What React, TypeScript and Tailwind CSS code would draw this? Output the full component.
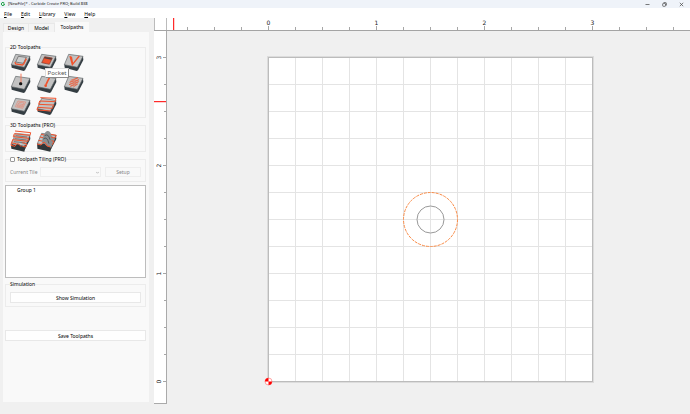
import React from "react";

type IconName =
  | "contour"
  | "pocket"
  | "vcarve"
  | "drill"
  | "engrave"
  | "texture"
  | "keyhole"
  | "facing"
  | "rough3d"
  | "finish3d";

const marks: Record<IconName, React.ReactNode> = {
  contour: (
    <>
      <path d="M22 7 L46 10 L37 28 L14 24 Z" fill="#cdcdcd" stroke="#555" strokeWidth="2" />
      <path d="M12 24 L14 30 L34 33 L38 30 L46 14" fill="none" stroke="#f0532d" strokeWidth="4" />
    </>
  ),
  pocket: (
    <>
      <path d="M23 8 L46 12 L37 31 L14 26 Z" fill="#f0532d" stroke="#7a3a2c" strokeWidth="2" />
      <path d="M23 9 L45 13 L43 17 L21 13 Z" fill="#4b3f3e" />
    </>
  ),
  vcarve: <path d="M18 6 L25 32 L46 6 M22 8 L26 30" fill="none" stroke="#f0532d" strokeWidth="4" />,
  drill: (
    <>
      <circle cx="29" cy="23" r="5" fill="#151515" />
      <path d="M30 -7 V19" stroke="#f47a5c" strokeWidth="3" />
    </>
  ),
  engrave: (
    <>
      <path d="M38 4 L33 13 L27 26" fill="none" stroke="#f0532d" strokeWidth="5" />
      <circle cx="26" cy="29" r="4" fill="#f0532d" />
    </>
  ),
  texture: (
    <path
      d="M20 13 L42 5 L17 19 L45 11 L15 26 L44 17 L19 31 L41 24 L27 34"
      fill="none"
      stroke="#f0532d"
      strokeWidth="2"
    />
  ),
  keyhole: (
    <path
      d="M21 9 L44 12 L35 31 L13 26 Z M25 13 L39 15 L33 27 L18 24 Z M22 17 L37 20 M20 21 L35 24"
      fill="none"
      stroke="#e98a76"
      strokeWidth="2"
    />
  ),
  facing: (
    <path
      d="M10 -1 L57 1 L54 11 L8 9 L5 19 L50 21 L46 31 L2 28 L0 36 L42 39"
      fill="none"
      stroke="#f0532d"
      strokeWidth="3"
    />
  ),
  rough3d: (
    <>
      <path d="M15 0 L56 4 L44 36 L33 34 L27 27 L19 29 L13 36 L1 32 Z" fill="#b2b4b5" />
      <path d="M14 8 L48 12 M11 17 L47 21 M9 26 L43 30" stroke="#5a5f61" strokeWidth="2" />
      <path d="M0 35 L13 39 Q21 26 30 41 L43 44 L40 56 L1 47 Z" fill="#30373a" />
      <path
        d="M12 -6 L59 -1 L57 7 L10 2 L7 11 L53 16 L51 25 L5 20 L2 30 L16 32 M34 29 L47 33 L44 42 L34 40 M1 31 L0 37 L12 40 Q20 24 30 41"
        fill="none"
        stroke="#f0532d"
        strokeWidth="3"
      />
    </>
  ),
  finish3d: (
    <>
      <path d="M14 28 Q20 -1 30 -6 Q40 -8 44 8 L54 18 L42 44 L30 38 Z" fill="#8b9092" />
      <path d="M23 8 Q34 0 39 20 M19 18 Q30 8 36 32" fill="none" stroke="#50575a" strokeWidth="3" />
      <path d="M1 33 L13 38 Q20 23 29 41 L43 45 L40 56 L1 47 Z" fill="#30373a" />
      <path
        d="M12 4 L22 6 M42 4 L58 7 L54 15 L43 13 M8 12 L18 14 M4 22 L15 24 M44 23 L51 25 L46 35 M0 33 L12 36 Q22 18 30 39 L41 42"
        fill="none"
        stroke="#f0532d"
        strokeWidth="3"
      />
    </>
  ),
};

function ToolIcon({ name }: { name: IconName }) {
  return (
    <svg viewBox="0 0 60 51" className="h-[17px] w-5 overflow-visible" aria-hidden="true">
      <path d="M1 31 L2 41 L38 51 L42 49 L58 18 L57 7 Z" fill="#343d42" />
      <path d="M14 1 L57 7 L40 40 L1 32 Z" fill="#c2c2c2" stroke="#5d6467" strokeWidth="2" />
      {marks[name]}
    </svg>
  );
}

function ToolButton({ name, label }: { name: IconName; label: string }) {
  return (
    <button type="button" aria-label={label} className="flex h-[22px] items-center">
      <ToolIcon name={name} />
    </button>
  );
}

function MenuItem({ text }: { text: string }) {
  return (
    <button type="button">
      <span className="underline">{text[0]}</span>
      {text.slice(1)}
    </button>
  );
}

const PITCH = 27;
const steps = Array.from({ length: 40 }, (_, i) => i);
const gridSteps = Array.from({ length: 11 }, (_, i) => (i + 1) * PITCH);

function TopRuler() {
  return (
    <svg className="h-3 min-w-0 flex-1 bg-white" aria-label="Horizontal ruler">
      {steps.map((i) => (
        <path key={i} d={`M${20.5 + i * PITCH} ${i % 4 === 3 ? 8 : 9}V12`} stroke="#a6a6a6" />
      ))}
      {[0, 1, 2, 3].map((n) => (
        <text key={n} x={101.5 + n * 108} y="7" textAnchor="middle" className="fill-[#222] text-[6px]">
          {n}
        </text>
      ))}
      <rect x="6" y="0" width="1" height="12" fill="#ff2a2a" />
      <rect x="7" y="0" width="1" height="12" fill="#ffd0d0" />
    </svg>
  );
}

function SideRuler() {
  return (
    <svg className="w-3 shrink-0 bg-white" aria-label="Vertical ruler">
      {steps.slice(0, 13).map((i) => (
        <path key={i} d={`M${i % 4 === 0 ? 9 : 10} ${26.5 + i * PITCH}H12`} stroke="#a6a6a6" />
      ))}
      {[3, 2, 1, 0].map((n, i) => (
        <text
          key={n}
          transform={`translate(7 ${26.5 + i * 108}) rotate(-90)`}
          textAnchor="middle"
          className="fill-[#222] text-[6px]"
        >
          {n}
        </text>
      ))}
      <rect x="0" y="70" width="12" height="1" fill="#ff2a2a" />
      <rect x="0" y="71" width="12" height="1" fill="#ffd0d0" />
    </svg>
  );
}

function Workspace() {
  return (
    <svg className="min-w-0 flex-1 bg-[#f0f0f0]" aria-label="Design canvas">
      <rect x="100" y="25" width="327" height="327" fill="#dcdcdc" />
      <rect x="101.5" y="26.5" width="324" height="324" fill="#fff" stroke="#bcbcbc" />
      {gridSteps.map((v) => (
        <path key={v} d={`M${101.5 + v} 27V350M102 ${26.5 + v}H425`} stroke="#e4e4e4" />
      ))}
      <circle cx="263.5" cy="188.5" r="27" fill="none" stroke="#f98a45" strokeDasharray="3 1" />
      <circle cx="263.5" cy="188.5" r="13.5" fill="none" stroke="#999" />
      <circle cx="101.5" cy="350.5" r="3.5" fill="#fff" stroke="#f66" strokeWidth="0.6" />
      <path d="M101.5 350.5V347A3.5 3.5 0 0 0 98 350.5ZM101.5 350.5H105A3.5 3.5 0 0 1 101.5 354Z" fill="#f00" />
    </svg>
  );
}

const group = "min-w-0 border border-[#ececec] px-1";
const legend = "leading-[6px]";
const pushButton = "border border-[#e8e8e8] bg-[#fefefe] text-center";

export default function App() {
  return (
    <div className="flex min-h-screen w-full flex-col bg-[#f0f0f0] font-['Noto_Sans','Open_Sans',sans-serif] text-[5px] leading-[8px] text-black">
      <header className="flex h-2 items-center bg-[#eff3f9] pl-px text-[4px] text-[#222]">
        <svg viewBox="0 0 12 12" className="mr-[3px] size-1" aria-hidden="true">
          <path d="M10 3A5 5 0 1 0 10 9V6H6" fill="none" stroke="#22a34b" strokeWidth="3" />
        </svg>
        <h1 className="whitespace-nowrap">[NewFile]* - Carbide Create PRO; Build 838</h1>
        <div className="ml-auto flex items-center gap-3 pr-[6px]">
          <button type="button" aria-label="Minimize">
            <svg viewBox="0 0 5 5" className="size-[5px]" stroke="#444" strokeWidth="0.7" fill="none">
              <path d="M0.5 2.5H4.5" />
            </svg>
          </button>
          <button type="button" aria-label="Restore">
            <svg viewBox="0 0 5 5" className="size-[5px]" stroke="#444" strokeWidth="0.7" fill="none">
              <rect x="0.7" y="1.4" width="2.8" height="2.9" rx="0.6" />
              <path d="M1.6 0.6H3.6Q4.4 0.6 4.4 1.4V3.5" />
            </svg>
          </button>
          <button type="button" aria-label="Close">
            <svg viewBox="0 0 5 5" className="size-[5px]" stroke="#444" strokeWidth="0.7" fill="none">
              <path d="M0.8 0.8L4.2 4.2M4.2 0.8L0.8 4.2" />
            </svg>
          </button>
        </div>
      </header>

      <nav className="flex h-[10px] items-center gap-[9px] bg-white px-1 pt-px">
        {["File", "Edit", "Library", "View", "Help"].map((m) => (
          <MenuItem key={m} text={m} />
        ))}
      </nav>

      <div className="flex flex-1">
        <aside className="flex w-[154px] shrink-0 flex-col pt-1 pr-[5px] pb-3 pl-[3px]">
          <div role="tablist" className="flex h-[10px] items-end">
            <button type="button" role="tab" className="h-[9px] w-[26px] border border-b-0 border-[#e8e8e8] bg-[#f4f4f4]">
              Design
            </button>
            <button type="button" role="tab" className="h-[9px] w-[26px] border border-b-0 border-l-0 border-[#e8e8e8] bg-[#f4f4f4]">
              Model
            </button>
            <button type="button" role="tab" aria-selected="true" className="h-[10px] w-[34px] bg-[#f9f9f9]">
              Toolpaths
            </button>
          </div>

          <div role="tabpanel" className="flex-1 bg-[#f9f9f9] pt-3 pr-[3px] pl-[2px]">
            <fieldset className={`${group} h-[74px]`}>
              <legend className={legend}>2D Toolpaths</legend>
              <div className="relative grid grid-cols-[26px_27px_27px] pt-px pl-px">
                <ToolButton name="contour" label="Contour" />
                <ToolButton name="pocket" label="Pocket tool" />
                <ToolButton name="vcarve" label="VCarve" />
                <ToolButton name="drill" label="Drill" />
                <ToolButton name="engrave" label="Engrave" />
                <ToolButton name="texture" label="Texture" />
                <ToolButton name="keyhole" label="Keyhole" />
                <ToolButton name="facing" label="Facing" />
                <div
                  role="tooltip"
                  className="absolute top-[18px] left-[35px] flex h-[10px] w-6 items-center justify-center border border-[#dedede] border-r-[#8a8a8a] border-b-[#8a8a8a] bg-white text-[6px] text-[#555]"
                >
                  Pocket
                </div>
              </div>
            </fieldset>

            <fieldset className={`${group} mt-1 h-[30px]`}>
              <legend className={legend}>3D Toolpaths (PRO)</legend>
              <div className="grid grid-cols-[26px_27px] pt-[2px] pl-px">
                <ToolButton name="rough3d" label="3D Rough" />
                <ToolButton name="finish3d" label="3D Finish" />
              </div>
            </fieldset>

            <fieldset className={`${group} mt-1 h-[26px]`}>
              <legend className={legend}>
                <label className="flex items-center gap-[2px]">
                  <input type="checkbox" className="size-[5px] appearance-none rounded-[1px] border border-[#999] bg-white" />
                  Toolpath Tiling (PRO)
                </label>
              </legend>
              <div className="flex items-center pt-[5px] text-[#858585]">
                <label htmlFor="tile" className="w-[30px] shrink-0">
                  Current Tile
                </label>
                <div className="grid min-w-0 flex-1 items-center">
                  <select
                    id="tile"
                    disabled
                    className="col-start-1 row-start-1 h-[10px] w-full appearance-none border border-[#eee] bg-[#fafafa]"
                  />
                  <svg viewBox="0 0 4 4" className="col-start-1 row-start-1 mr-[2px] size-[3px] justify-self-end" aria-hidden="true">
                    <path d="M0 1L2 3L4 1" fill="none" stroke="#aaa" />
                  </svg>
                </div>
                <button type="button" disabled className="ml-1 h-[10px] w-9 border border-[#eee]">
                  Setup
                </button>
              </div>
            </fieldset>

            <ul className="mt-[3px] h-[93px] border border-[#bdbdbd] bg-white px-[11px]">
              <li>Group 1</li>
            </ul>

            <fieldset className={`${group} mt-[3px] h-[26px]`}>
              <legend className={legend}>Simulation</legend>
              <button type="button" className={`${pushButton} mt-[5px] block h-[11px] w-full`}>
                Show Simulation
              </button>
            </fieldset>

            <button type="button" className={`${pushButton} mt-[23px] block h-[11px] w-full`}>
              Save Toolpaths
            </button>
          </div>
        </aside>

        <main className="mb-[10px] flex min-w-0 flex-1 flex-col font-['DejaVu_Sans','Noto_Sans',sans-serif]">
          <div className="flex border-b border-[#a4a4a4]">
            <div className="w-[13px] shrink-0 border-r border-l border-[#bbb] bg-white" />
            <TopRuler />
          </div>
          <div className="flex flex-1">
            <div className="flex border-r border-b border-[#aaa]">
              <SideRuler />
            </div>
            <Workspace />
          </div>
        </main>
      </div>
    </div>
  );
}
